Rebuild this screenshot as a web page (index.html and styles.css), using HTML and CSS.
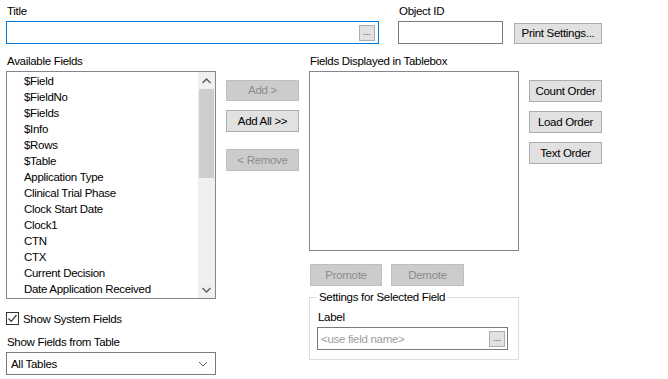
FILE: index.html
```html
<!DOCTYPE html>
<html>
<head>
<meta charset="utf-8">
<link rel="stylesheet" href="styles.css">
</head>
<body>
<div class="page">
  <div class="top-row">
    <div class="title-field">
      <div class="lbl">Title</div>
      <div class="input focused">
        <span class="ell-btn">...</span>
      </div>
    </div>
    <div class="objid-field">
      <div class="lbl">Object ID</div>
      <div class="input"></div>
    </div>
    <button class="btn print-btn">Print Settings...</button>
  </div>

  <div class="main-row">
    <div class="col-left">
      <div class="lbl sec-lbl">Available Fields</div>
      <div class="listbox avail">
        <ul class="items">
          <li>$Field</li>
          <li>$FieldNo</li>
          <li>$Fields</li>
          <li>$Info</li>
          <li>$Rows</li>
          <li>$Table</li>
          <li>Application Type</li>
          <li>Clinical Trial Phase</li>
          <li>Clock Start Date</li>
          <li>Clock1</li>
          <li>CTN</li>
          <li>CTX</li>
          <li>Current Decision</li>
          <li>Date Application Received</li>
        </ul>
        <div class="scrollbar">
          <div class="sb-arrow">
            <svg width="9" height="6" viewBox="0 0 9 6"><path d="M0.5 5 L4.5 1 L8.5 5" fill="none" stroke="#606060" stroke-width="1.5"/></svg>
          </div>
          <div class="sb-thumb"></div>
          <div class="sb-track"></div>
          <div class="sb-arrow">
            <svg width="9" height="6" viewBox="0 0 9 6"><path d="M0.5 1 L4.5 5 L8.5 1" fill="none" stroke="#606060" stroke-width="1.5"/></svg>
          </div>
        </div>
      </div>
      <label class="check-row">
        <span class="checkbox">
          <svg width="11" height="11" viewBox="0 0 11 11"><path d="M1.5 5.5 L4.2 8.3 L9.5 2" fill="none" stroke="#333" stroke-width="1.2"/></svg>
        </span>
        <span>Show System Fields</span>
      </label>
      <div class="lbl table-lbl">Show Fields from Table</div>
      <div class="combo">
        <span>All Tables</span>
        <svg width="10" height="6" viewBox="0 0 10 6"><path d="M1 1 L5 5 L9 1" fill="none" stroke="#606060" stroke-width="1"/></svg>
      </div>
    </div>

    <div class="col-mid">
      <button class="btn disabled add-btn">Add &gt;</button>
      <button class="btn addall-btn">Add All &gt;&gt;</button>
      <button class="btn disabled remove-btn">&lt; Remove</button>
    </div>

    <div class="col-right">
      <div class="lbl sec-lbl">Fields Displayed in Tablebox</div>
      <div class="listbox displayed"></div>
      <div class="order-row">
        <button class="btn disabled promote-btn">Promote</button>
        <button class="btn disabled demote-btn">Demote</button>
      </div>
      <fieldset class="group">
        <legend>Settings for Selected Field</legend>
        <div class="lbl group-lbl">Label</div>
        <div class="input label-input">
          <span class="placeholder">&lt;use field name&gt;</span>
          <span class="ell-btn">...</span>
        </div>
      </fieldset>
    </div>

    <div class="col-far">
      <button class="btn order-btn">Count Order</button>
      <button class="btn order-btn">Load Order</button>
      <button class="btn order-btn">Text Order</button>
    </div>
  </div>
</div>
</body>
</html>
```

FILE: styles.css
```css
* { box-sizing: border-box; }
html, body { margin: 0; padding: 0; background: #ffffff; }
body {
  font-family: "Liberation Sans", Arial, sans-serif;
  font-size: 11.5px;
  letter-spacing: -0.3px;
  color: #000;
  width: 668px;
  height: 379px;
  overflow: hidden;
}
.page { padding: 3px 0 0 6px; }

.lbl { line-height: 16px; height: 16px; padding-left: 1px; white-space: nowrap; }
.sec-lbl { line-height: 12px; }

.input {
  height: 23px;
  border: 1px solid #7a7a7a;
  background: #fff;
  display: flex;
  align-items: center;
  justify-content: flex-end;
  padding: 0 3px;
}
.input.focused { border-color: #0078d7; }

.ell-btn {
  width: 16px;
  height: 16px;
  background: #e1e1e1;
  border: 1px solid #adadad;
  font-size: 9px;
  letter-spacing: 0;
  line-height: 12px;
  text-align: center;
  color: #333;
}

.top-row { display: flex; align-items: flex-start; }
.title-field { width: 373px; }
.title-field .input { margin-top: 2px; }
.objid-field { width: 105px; margin-left: 19px; }
.objid-field .input { margin-top: 2px; }

.btn {
  font-family: inherit;
  font-size: 11.5px;
  letter-spacing: -0.3px;
  background: #e1e1e1;
  border: 1px solid #adadad;
  color: #000;
  padding: 0;
  margin: 0;
  height: 21px;
  line-height: 19px;
  text-align: center;
  white-space: nowrap;
}
.btn.disabled { background: #cccccc; border-color: #bfbfbf; color: #8d8d8d; }
.print-btn { width: 88px; margin-left: 11px; margin-top: 20px; height: 21px; }

.main-row { display: flex; align-items: flex-start; margin-top: 11px; }

.col-left { width: 210px; display: flex; flex-direction: column; }
.listbox { border: 1px solid #828790; background: #fff; }
.avail { height: 228px; display: flex; }
.items { list-style: none; margin: 0; padding: 1px 0 0 17px; flex: 1; overflow: hidden; }
.items li { height: 16px; line-height: 16px; white-space: nowrap; }
.scrollbar { width: 17px; display: flex; flex-direction: column; background: #f0f0f0; }
.sb-arrow { height: 17px; display: flex; align-items: center; justify-content: center; background: #f0f0f0; }
.sb-thumb { height: 89px; background: #cdcdcd; margin: 0 1px; }
.sb-track { flex: 1; }

.check-row { display: flex; align-items: center; margin-top: 12px; height: 15px; }
.checkbox {
  width: 13px; height: 13px; border: 1px solid #333; margin-right: 4px;
  display: flex; align-items: center; justify-content: center; background: #fff;
}
.table-lbl { margin-top: 8px; }
.combo {
  margin-top: 2px;
  height: 23px;
  border: 1px solid #7a7a7a;
  display: flex;
  align-items: center;
  justify-content: space-between;
  padding: 0 7px 0 4px;
  background: #fff;
}

.col-mid { width: 73px; margin-left: 10px; display: flex; flex-direction: column; padding-top: 25px; }
.add-btn { height: 21px; }
.addall-btn { margin-top: 9px; height: 22px; }
.remove-btn { margin-top: 17px; height: 22px; }

.col-right { width: 210px; margin-left: 10px; display: flex; flex-direction: column; }
.displayed { height: 180px; }
.order-row { display: flex; margin-top: 13px; padding-left: 1px; }
.promote-btn { width: 72px; height: 22px; }
.demote-btn { width: 73px; height: 22px; margin-left: 9px; }

.group {
  margin: 4px 0 0 0;
  padding: 0 10px 9px 7px;
  border: 1px solid #dcdcdc;
  min-width: 0;
}
.group legend { padding: 0 2px; margin-left: 0; line-height: 14px; }
.group-lbl { margin-top: 5px; }
.label-input { margin-top: 2px; justify-content: space-between; padding: 0 2px 0 3px; }
.placeholder { color: #a0a0a0; }

.col-far { width: 73px; margin-left: 10px; display: flex; flex-direction: column; padding-top: 25px; }
.order-btn { height: 22px; }
.order-btn + .order-btn { margin-top: 9px; }
```
